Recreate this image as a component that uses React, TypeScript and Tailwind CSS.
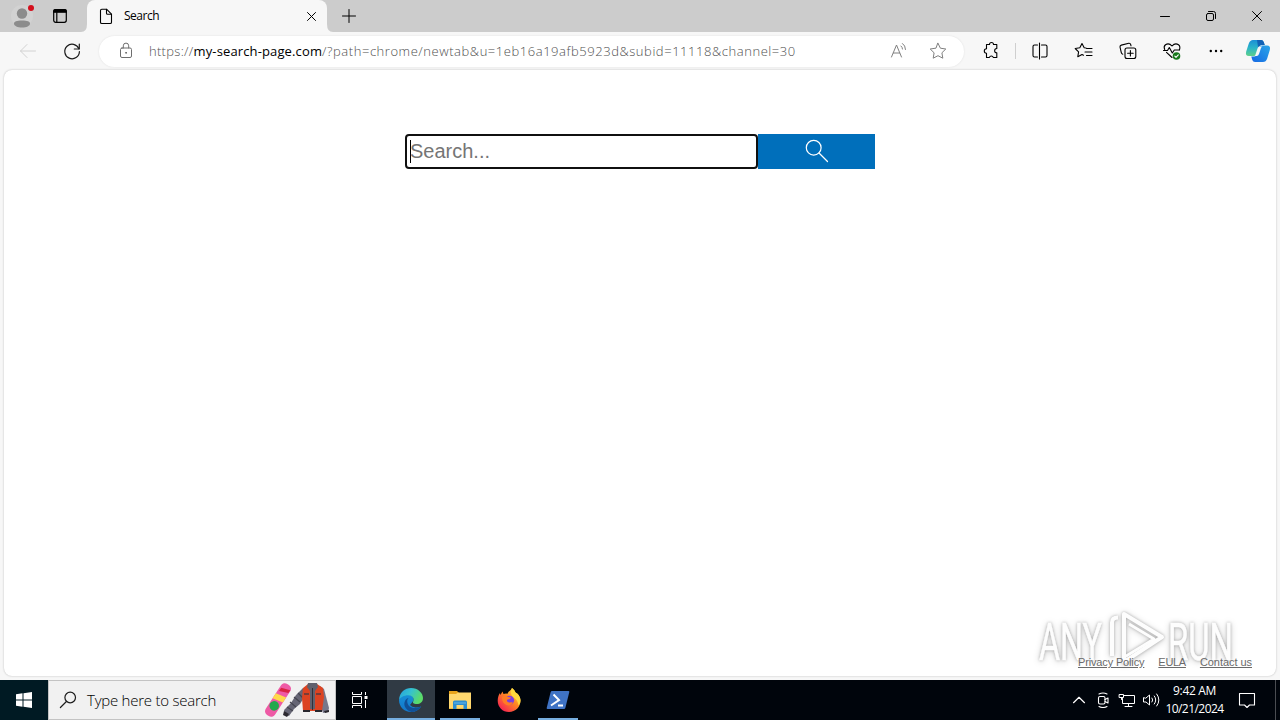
import type { ReactNode } from 'react';

type IconProps = { children: ReactNode; size?: number; className?: string; sw?: number };

function Icon({ children, size = 20, className = '', sw = 1.1 }: IconProps) {
  return (
    <svg
      width={size}
      height={size}
      viewBox={`0 0 ${size} ${size}`}
      fill="none"
      stroke="currentColor"
      strokeWidth={sw}
      strokeLinecap="round"
      strokeLinejoin="round"
      className={`block shrink-0 ${className}`}
    >
      {children}
    </svg>
  );
}

function Cell({ className = '', children }: { className?: string; children?: ReactNode }) {
  return <div className={`flex shrink-0 items-center justify-center ${className}`}>{children}</div>;
}

function TabStrip() {
  return (
    <div className="flex h-8 bg-[#cccccc]">
      <Cell className="w-11">
        <svg width="28" height="28" viewBox="0 0 28 28" className="block">
          <circle cx="14" cy="14" r="11" fill="#d2d2d2" />
          <circle cx="14" cy="11.500" r="5.200" fill="#8c8c8c" />
          <path d="M6 21.500c0-2 2.500-3 8-3s8 1 8 3c0 2.500-3.500 4-8 4s-8-1.500-8-4z" fill="#8c8c8c" />
          <circle cx="23" cy="6" r="3" fill="#d40f1c" />
        </svg>
      </Cell>
      <Cell className="w-8">
        <Icon size={16} sw={1.2}>
          <rect x="1.700" y="1.700" width="12.600" height="12.600" rx="2" />
          <path d="M1.700 4.200V3.200q0-1.500 1.500-1.500h9.600q1.500 0 1.500 1.500v1z" fill="currentColor" />
          <path d="M4.800 4.500v9.500" />
        </Icon>
      </Cell>
      <div className="ml-[5px] flex">
        <svg width="6" height="32" className="block">
          <path d="M0 32q6 0 6-8v8z" fill="#f7f7f7" />
        </svg>
        <div className="flex w-[240px] items-center rounded-t-lg bg-[#f7f7f7]">
          <Icon size={18} className="ml-[10px]" sw={1.1}>
            <path d="M3.500 3.500q0-1.300 1.300-1.300h4.700l5 5v8q0 1.300-1.300 1.300H4.800q-1.300 0-1.300-1.300z" />
            <path d="M9.500 2.300v4q0 1 1 1h4" />
          </Icon>
          <span className="ml-[9px] flex-1 text-[12px] leading-4 tracking-[-0.500px] text-black">Search</span>
          <Icon size={12} sw={1} className="mr-[10px]">
            <path d="M2.500 2.500l8 8M10.500 2.500l-8 8" />
          </Icon>
        </div>
        <svg width="6" height="32" className="block">
          <path d="M6 32q-6 0-6-8v8z" fill="#f7f7f7" />
        </svg>
      </div>
      <Cell className="w-[31px]">
        <Icon size={16} sw={1}>
          <path d="M8 1.500v13M1.500 8h13" />
        </Icon>
      </Cell>
      <div className="flex-1" />
      <Cell className="w-[46px]">
        <Icon size={12} sw={1}>
          <path d="M1.500 6.500h9" />
        </Icon>
      </Cell>
      <Cell className="w-[46px]">
        <Icon size={12} sw={1}>
          <rect x="1.500" y="3.500" width="7" height="7" rx="1.500" />
          <path d="M3.500 1.500h5q2 0 2 2v5" />
        </Icon>
      </Cell>
      <Cell className="w-[46px]">
        <Icon size={12} sw={1}>
          <path d="M1.500 1.500l9 9M10.500 1.500l-9 9" />
        </Icon>
      </Cell>
    </div>
  );
}

function CopilotIcon() {
  return (
    <svg width="26" height="24" viewBox="0 0 26 24" className="block">
      <defs>
        <linearGradient id="copA" x1="0" y1="0" x2="0" y2="1">
          <stop offset="0" stopColor="#1b8fd6" />
          <stop offset=".5" stopColor="#2cb5c8" />
          <stop offset="1" stopColor="#5fd08a" />
        </linearGradient>
        <linearGradient id="copB" x1="1" y1="0" x2="0" y2="1">
          <stop offset="0" stopColor="#2aa6e8" />
          <stop offset="1" stopColor="#1668e3" />
        </linearGradient>
      </defs>
      <path d="M8 1h8q2 0 2.700 2l1 3h-3q-2 0-2.600 2l-2 6.500Q11.200 17 9 17H4Q0 17 1.200 12.500l2.600-8Q5 1 8 1z" fill="url(#copA)" />
      <path d="M12 1h4q2 0 2.700 2l1 3h-3q-2 0-2.600 2l-.8 2z" fill="#1262b5" />
      <path d="M18 23h-8q-2 0-2.700-2l-1-3.500h3q2 0 2.600-2l2-6.500Q14.800 6.500 17 6.500h5q4 0 2.800 4.500l-2.600 8.500Q21 23 18 23z" fill="url(#copB)" />
      <path d="M15.500 7.500h-1.500q-1 .5-1.500 2l-2.500 7.500h2q1.500-.3 2.200-2.500l1.800-5.500q.5-1.500 1.500-1.500z" fill="#f7f7f7" />
    </svg>
  );
}

function Toolbar() {
  return (
    <div className="flex h-[38px] items-center bg-[#f7f7f7] pl-[6px]">
      <Cell className="w-11 text-[#d2d2d2]">
        <Icon sw={1}>
          <path d="M17.500 10h-15M9 3.500L2.500 10 9 16.500" />
        </Icon>
      </Cell>
      <Cell className="w-11 text-[#1b1b1b]">
        <Icon sw={1.2}>
          <path d="M16.900 7.800A7.300 7.300 0 1 0 17.400 10.500" />
          <path d="M17.300 3v5h-5" />
        </Icon>
      </Cell>
      <div className="ml-[5px] flex h-[31px] w-[865px] items-center rounded-full bg-white shadow-[0_0_2px_#dedede]">
        <Icon className="ml-[17px] text-[#6e6e6e]" sw={1}>
          <rect x="4.500" y="7" width="11" height="9.500" rx="1.500" />
          <path d="M7.300 7V4.800a2.700 2.700 0 0 1 5.400 0V7" />
          <circle cx="10" cy="11.800" r=".5" fill="currentColor" />
        </Icon>
        <div className="ml-[13px] flex flex-1 whitespace-nowrap text-[13px] leading-5 text-[#505050]">
          <span className="font-light tracking-[0.300px]">https://</span>
          <span className="tracking-[0.130px] text-black">my-search-page.com</span>
          <span className="font-light tracking-[0.550px]">/?path=chrome/newtab&amp;u=1eb16a19afb5923d&amp;subid=11118&amp;channel=30</span>
        </div>
        <Cell className="w-[39px] text-[#808080]">
          <Icon sw={1}>
            <path d="M2.500 16l5-12 5 12M4.300 12h6.400" />
            <path d="M12 5q1.500 1.200 1.500 3M13.500 2.500q3 2 3 6" />
          </Icon>
        </Cell>
        <Cell className="mr-[7px] w-[39px] text-[#808080]">
          <Icon sw={1}>
            <path d="M10 2.300l2.400 4.900 5.400.8-3.900 3.800.9 5.400-4.800-2.500-4.800 2.500.9-5.400L2.200 8l5.400-.8z" />
          </Icon>
        </Cell>
      </div>
      <Cell className="ml-[5px] w-11">
        <Icon sw={1.1}>
          <path d="M5.500 3.500h3a2 2 0 0 1 4 0h3.300v4a2.100 2.100 0 0 0 0 4.300v4.700h-3.500a2 2 0 0 0-3.900 0H5.500v-4.300a2.200 2.200 0 0 1 0-4.400z" />
        </Icon>
      </Cell>
      <div className="ml-[2px] mr-[2px] h-4 w-px bg-[#cfcfcf]" />
      <Cell className="w-11">
        <Icon sw={1.1}>
          <path d="M7.500 4h-3q-1.500 0-1.500 1.500v9Q3 16 4.500 16h3M11.500 4h4q1.500 0 1.500 1.500v9q0 1.500-1.500 1.500h-4M9.500 2v16" />
        </Icon>
      </Cell>
      <Cell className="w-11">
        <Icon sw={1.1}>
          <path d="M12 7l-1.800-.3L8 2.500 5.800 6.800l-4.600.7 3.400 3.300-.8 4.900L8 13.500l1.500.7" />
          <path d="M12.500 7.500H18M11 11h7M12.500 14.500H18" />
        </Icon>
      </Cell>
      <Cell className="w-11">
        <Icon sw={1.1}>
          <rect x="7" y="7" width="10.800" height="10.500" rx="2" />
          <path d="M12.400 9.500v5.500M9.600 12.300h5.600" />
          <path d="M4.800 13.200q-1.200-.2-1.500-1.500L2 6q-.2-1.500 1.300-1.900l7.500-1.800q1.500-.2 1.900 1.200l.3 1.300" />
        </Icon>
      </Cell>
      <Cell className="w-11">
        <Icon sw={1.1}>
          <path d="M2.700 8.500Q1.300 5.500 3.500 3.800 6.800 1.500 10 5q3.200-3.500 6.500-1.200Q18.700 5.500 17.400 9M10 16.500L4.500 11.300" />
          <path d="M1.500 9.500h4l1.800-3 3 5.500 2-3H17" />
          <circle cx="14.500" cy="15" r="3.800" fill="#18791c" stroke="none" />
          <path d="M12.800 15.100l1.200 1.200 2.300-2.500" stroke="#fff" />
        </Icon>
      </Cell>
      <Cell className="w-11">
        <Icon>
          <g fill="currentColor" stroke="none">
            <circle cx="4.800" cy="10" r="1.200" />
            <circle cx="10" cy="10" r="1.200" />
            <circle cx="15.200" cy="10" r="1.200" />
          </g>
        </Icon>
      </Cell>
      <Cell className="w-10">
        <CopilotIcon />
      </Cell>
    </div>
  );
}

function Watermark() {
  return (
    <svg
      width="210"
      height="72"
      viewBox="0 0 210 72"
      overflow="visible"
      className="block [filter:drop-shadow(0_0_1.500px_rgba(0,0,0,0.26))_drop-shadow(0_1px_3px_rgba(0,0,0,0.2))]"
    >
      <g fill="#fdfdfd" stroke="#fdfdfd" strokeWidth=".6" fontFamily="Roboto, 'Liberation Sans', sans-serif" fontSize="51">
        <text x="9" y="55.500" textLength="63" lengthAdjust="spacingAndGlyphs">ANY</text>
        <text x="138" y="55.500" textLength="65" lengthAdjust="spacingAndGlyphs">RUN</text>
      </g>
      <g fill="none" stroke="#fdfdfd" strokeWidth="4" strokeLinejoin="round">
        <path d="M94 10v48l38-25z" />
        <path d="M88 13.500q-6 0-6 5V52" />
        <path d="M99 20l25 15-31 19" strokeWidth="3" />
      </g>
    </svg>
  );
}

function Page() {
  return (
    <div className="flex flex-1 flex-col bg-[#f7f7f7] px-1 pb-1">
      <main className="relative flex flex-1 flex-col rounded-lg bg-white shadow-[0_0_2px_#b5b5b5]">
        <form className="ml-[401px] mt-16 flex h-[35px]">
          <div className="flex w-[353px] items-center rounded-[4px] border-2 border-[#101010] bg-white pl-[3px] font-['Liberation_Sans',Arial,sans-serif] text-[20px] leading-6 text-[#757575]">
            <span className="h-[23px] w-px bg-black" />
            <span className="-ml-px -mt-[2px]">Search...</span>
          </div>
          <button type="button" className="flex w-[117px] items-center justify-center bg-[#006fbb] pb-[2px] text-white">
            <Icon size={26} sw={1.2}>
              <circle cx="9.700" cy="9.700" r="7.400" />
              <path d="M15 15l8.500 8.500" />
            </Icon>
          </button>
        </form>
        <div className="flex-1" />
        <div className="pointer-events-none absolute bottom-0 right-[36px]">
          <Watermark />
        </div>
        <footer className="relative mb-[6px] mr-6 flex justify-end gap-[14px] font-['Liberation_Sans',Arial,sans-serif] text-[11px] leading-4 text-[#6a6a6a] underline">
          <span className="tracking-[-0.150px]">Privacy Policy</span>
          <span className="tracking-[-0.300px]">EULA</span>
          <span className="tracking-[-0.050px]">Contact us</span>
        </footer>
      </main>
    </div>
  );
}

function SearchArt() {
  return (
    <svg width="66" height="36" viewBox="0 0 66 36" className="block">
      <g transform="rotate(33 14 18)">
        <rect x="8.500" y="-.5" width="11" height="37" rx="4.500" fill="#ee5aa5" />
        <path d="M10 6l9-3v3.500l-9 3.500z" fill="#d92343" />
        <path d="M8.500 13.500l11-2v6l-11 2z" fill="#ffd94a" />
        <circle cx="14" cy="25" r="4.800" fill="#23a84d" />
      </g>
      <path d="M39 6L32 13l-5 8-7 7 1 5 4 1 5-7 6-5 5-8z" fill="#666675" />
      <path d="M30 15l6 5M26 20l6 5M23 25l6 4M34 11l5 5" stroke="#44444f" strokeWidth="1.200" />
      <path d="M20 29l5 3-2 3-4-2z" fill="#2c2930" />
      <path d="M56 4l4 3 5 19-1 4-5 1-3-9z" fill="#77778a" />
      <path d="M44 2h9l6 4 1 9-2 14H39l-1-13 1-10z" fill="#dc4322" />
      <path d="M44 1h9l1 4-3 4v18h-5V9l-3-4z" fill="#60606d" />
      <path d="M48.500 6v22" stroke="#303039" />
      <path d="M39 28h7v2h-7zM51 28h7v2h-7zM60 29l5-1v2l-4 1z" fill="#28262d" />
      <path d="M40 12h5M52 12h5" stroke="#7b3b36" strokeWidth="2" />
    </svg>
  );
}

function EdgeIcon() {
  return (
    <svg width="24" height="24" viewBox="0 0 24 24" className="block">
      <defs>
        <linearGradient id="edgeTop" x1="0" y1="0" x2="1" y2=".4">
          <stop offset="0" stopColor="#249fdf" />
          <stop offset=".5" stopColor="#35c1d1" />
          <stop offset="1" stopColor="#5bdc68" />
        </linearGradient>
        <linearGradient id="edgeBody" x1="0" y1="0" x2="0" y2="1">
          <stop offset="0" stopColor="#1790d8" />
          <stop offset="1" stopColor="#1375c8" />
        </linearGradient>
      </defs>
      <path d="M0 12C1 8 5 6 9.500 6.500 13 7 15 9.500 14.500 12.500L11 17q3 4 11.200 1.500C20 22 16.500 24 12 24 5 24 0 18.500 0 12z" fill="url(#edgeBody)" />
      <path d="M8.200 13c0 5 4 7.500 8.500 7 2.500-.2 4.200-1.200 5.500-1.800C20 22 16 24 12.500 24 7.500 22.500 4.500 18 5.500 14.500c.6-2.500 2-4 4-4.500-.9 1-1.300 2-1.300 3z" fill="#115096" />
      <path d="M0 12C.5 4 6 0 12 0c7 0 12 5 12 10 0 4-3 6-6.200 6-3.500 0-4.300-1.500-3.600-2.500C15.500 11 14 7.500 9.500 7.300 5 7.200 1 9.500 0 12z" fill="url(#edgeTop)" />
    </svg>
  );
}

function FirefoxIcon() {
  return (
    <svg width="24" height="24" viewBox="0 0 24 24" className="block">
      <defs>
        <linearGradient id="fox" x1=".9" y1=".1" x2=".2" y2=".9">
          <stop offset="0" stopColor="#ffe84a" />
          <stop offset=".45" stopColor="#ff8a22" />
          <stop offset="1" stopColor="#f7294f" />
        </linearGradient>
      </defs>
      <path d="M15 0c2 1.500 3 3 3.500 4.500 2 .8 5 4 5 8C23.500 19 18.500 24 12 24S.700 19 .700 12.700C.700 9 2 6.500 3 5l.4 2L5.500 3.500 6.500 6q2-.7 4-.3C11.500 3 14 2.500 15 0z" fill="url(#fox)" />
      <path d="M15 0c2 1.500 3 3 3.500 4.500 2 .8 5 4 5 8 0 2-1 4-2 5C21 11 16 10 14.500 7 13.500 4.500 14 2 15 0z" fill="#ffd83d" />
      <circle cx="12.500" cy="12.300" r="4.600" fill="#7b3ee0" />
      <path d="M5 9c2-2 4.500-1.500 6 0l3 .5c-.5 1.500-2 2-3.500 2-1.500 1 0 3.500 2.500 3 1.500-.5 2.500-.5 3 .3-1.500 2.500-4.500 3.200-6.500 2.200C6 15.500 5 12.500 5 9z" fill="#ff7b25" />
    </svg>
  );
}

function Taskbar() {
  return (
    <div className="flex h-10 bg-[#00050c] text-white">
      <Cell className="w-12 bg-[#001a23]">
        <svg width="16" height="16" viewBox="0 0 16 16" fill="#fff" className="block">
          <path d="M0 2.200L6.500 1.300V7.500H0zM7.500 1.200L16 0v7.500H7.500zM0 8.500h6.500v6.200L0 13.800zM7.500 8.500H16V16l-8.500-1.200z" />
        </svg>
      </Cell>
      <div className="flex w-72 items-center border border-[#c3c3c3] bg-[#f1f1f1] text-[#1c1c1c]">
        <Icon size={20} sw={1.2} className="ml-[9px]">
          <circle cx="12.200" cy="7.500" r="5.300" />
          <path d="M8.400 11.500l-6 6" />
        </Icon>
        <span className="ml-[9px] flex-1 whitespace-nowrap text-[15px] font-light leading-5 tracking-[-0.240px] text-black">Type here to search</span>
        <div className="mr-[5px]">
          <SearchArt />
        </div>
      </div>
      <Cell className="w-[51px] pr-[3px]">
        <svg width="18" height="16" viewBox="0 0 18 16" fill="none" stroke="#fff" className="block">
          <path d="M1.500 0v2.500h9V0M1.500 16v-2.500h9V16M1.500 4.500h9v7h-9zM14.500 0v3M14.500 8v8" />
          <path d="M13.500 4h3v3h-3z" fill="#fff" stroke="none" />
        </svg>
      </Cell>
      <Cell className="w-12 border-b-2 border-[#76aee0] bg-[#303a44] pt-[2px]">
        <EdgeIcon />
      </Cell>
      <Cell className="ml-[5px] w-10 border-b-2 border-[#76aee0]">
        <svg width="22" height="20" viewBox="0 0 22 20" className="mt-[2px] block">
          <path d="M0 1h8l2 2h12v16H0z" fill="#e8a41c" />
          <path d="M0 4h7l2-1.500h13V18.500H0z" fill="#ffd86f" />
          <path d="M4 12q0-1.500 1.500-1.500h11q1.500 0 1.500 1.500v7h-3.500v-4h-7v4H4z" fill="#2f8fd0" />
          <path d="M5 13h12" stroke="#68b7e6" />
        </svg>
      </Cell>
      <Cell className="ml-[5px] w-12">
        <FirefoxIcon />
      </Cell>
      <Cell className="ml-[5px] w-10 border-b-2 border-[#76aee0]">
        <svg width="24" height="20" viewBox="0 0 24 20" className="mt-[2px] block">
          <path d="M6 1h16.500q1 0 .8 1l-4 16q-.3 1-1.300 1H1.500q-1 0-.8-1L4.700 2Q5 1 6 1z" fill="#3f73c5" />
          <path d="M7.500 4.500l5.500 5.500L5 15.500M12 15.500h5" fill="none" stroke="#fff" strokeWidth="2" />
        </svg>
      </Cell>
      <div className="flex-1" />
      <Cell className="w-6">
        <Icon size={14} sw={1.2}>
          <path d="M1.500 9.700L7 4.300l5.500 5.400" />
        </Icon>
      </Cell>
      <Cell className="w-6">
        <Icon size={16} sw={1.1}>
          <rect x="3.500" y="4.500" width="6.500" height="7.500" rx="1.500" />
          <path d="M10 7.500l3-1.500v5l-3-1.500M4 2q4-2 8 0M4 14.500q4 2 8 0" />
        </Icon>
      </Cell>
      <Cell className="w-6">
        <Icon size={18} sw={1}>
          <path d="M6 4.500h10.500v8H4.500v-5M10.500 12.500v3M7 15.500h7M1.500 3.500h4v3h-4zM3.500 6.500v2" />
        </Icon>
      </Cell>
      <Cell className="w-6">
        <Icon size={18} sw={1}>
          <path d="M1.500 7v4h2.500l3.500 3V4L4 7zM10 7q1.500 2 0 4M12.300 5q3 4 0 8M14.700 3q4.500 6 0 12" />
        </Icon>
      </Cell>
      <div className="flex w-16 flex-col items-center justify-center whitespace-nowrap pr-px text-[12px] leading-[18px]">
        <span className="tracking-[-0.350px]">9:42 AM</span>
        <span className="tracking-[-0.550px]">10/21/2024</span>
      </div>
      <Cell className="w-10">
        <Icon size={18} sw={1.1}>
          <path d="M1.500 2.500h15v11.500h-5L9 16.500 6.500 14h-5z" />
        </Icon>
      </Cell>
      <div className="ml-2 mr-1 w-px bg-[#4a4d52]" />
    </div>
  );
}

export default function App() {
  return (
    <div className="flex h-[720px] w-[1280px] flex-col overflow-hidden bg-[#f7f7f7] font-['Open_Sans','Noto_Sans',sans-serif]">
      <TabStrip />
      <Toolbar />
      <Page />
      <Taskbar />
    </div>
  );
}
